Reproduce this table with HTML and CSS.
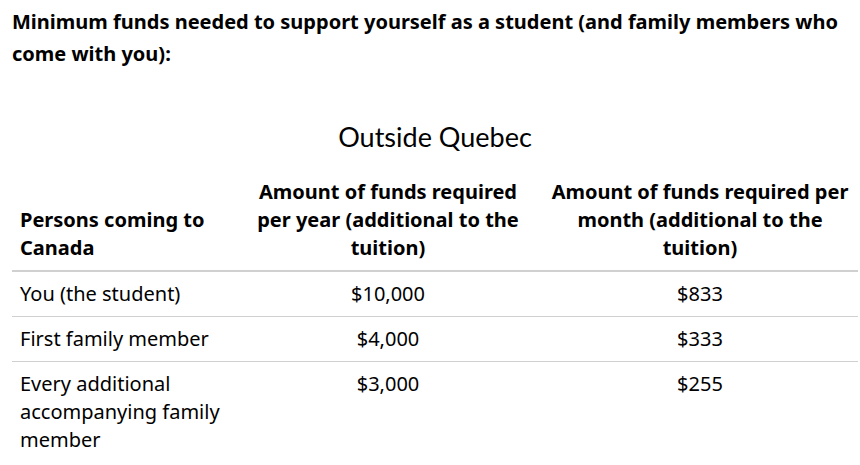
FILE: index.html
```html
<!DOCTYPE html>
<html>
<head>
<meta charset="utf-8">
<link rel="stylesheet" href="styles.css">
</head>
<body>
<p class="intro">Minimum funds needed to support yourself as a student (and family members who come with you):</p>
<table class="funds">
  <caption>Outside Quebec</caption>
  <thead>
    <tr>
      <th class="c1">Persons coming to Canada</th>
      <th class="c2">Amount of funds required per year (additional to the tuition)</th>
      <th class="c3">Amount of funds required per month (additional to the tuition)</th>
    </tr>
  </thead>
  <tbody>
    <tr><td class="c1">You (the student)</td><td class="c2">$10,000</td><td class="c3">$833</td></tr>
    <tr><td class="c1">First family member</td><td class="c2">$4,000</td><td class="c3">$333</td></tr>
    <tr><td class="c1">Every additional accompanying family member</td><td class="c2">$3,000</td><td class="c3">$255</td></tr>
  </tbody>
</table>
</body>
</html>
```

FILE: styles.css
```css
html, body {
  margin: 0;
  padding: 0;
  background: #fff;
}
body {
  padding: 0 2px 0 12px;
  font-family: "Noto Sans", "Open Sans", sans-serif;
  color: #000;
}
.intro {
  margin: 6px 0 0 0;
  font-size: 20px;
  font-weight: 700;
  line-height: 32px;
}
.funds {
  width: 846px;
  border-collapse: collapse;
  margin-top: 51px;
  table-layout: fixed;
}
.funds caption {
  font-family: Lato, "Noto Sans", sans-serif;
  font-size: 27px;
  line-height: 32px;
  font-weight: 400;
  padding-bottom: 25px;
  text-align: center;
}
.funds th {
  font-size: 20px;
  font-weight: 700;
  line-height: 28px;
  vertical-align: bottom;
  padding: 0 8px 8px;
  border-bottom: 2px solid #d0d0d0;
}
.funds td {
  font-size: 20px;
  line-height: 28px;
  vertical-align: top;
  padding: 8px 8px 8px;
  border-bottom: 1px solid #d0d0d0;
}
.funds tbody tr:last-child td {
  border-bottom: none;
}
.funds th.c1, .funds td.c1 { width: 206px; text-align: left; }
.funds th.c2, .funds td.c2 { width: 292px; text-align: center; }
.funds th.c3, .funds td.c3 { text-align: center; }
```
